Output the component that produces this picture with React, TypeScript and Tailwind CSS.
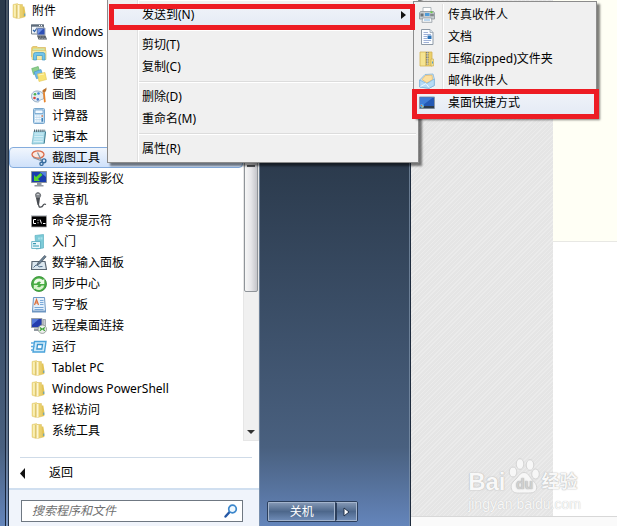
import React, { FC, ReactNode } from 'react';

const Icon: FC<{ children: ReactNode }> = ({ children }) => (
  <svg viewBox="0 0 16 16" className="size-4 shrink-0" aria-hidden="true">
    {children}
  </svg>
);

const FolderIcon = () => (
  <Icon>
    <path d="M1 1.5 5.5.5l1 1V15L5 15.6 1 14.2z" fill="#efdc84" stroke="#e0c878" strokeWidth=".5" />
    <path d="M2 2h1.8v12L2 13.5z" fill="#f9efb4" />
    <path d="M6.5 1.5h4v13l-4 1z" fill="#ead06c" stroke="#d8bd60" strokeWidth=".5" />
    <path d="M5.3 2h2.2v13l-1.4.5-.8-.6z" fill="#fdf6d2" />
    <path d="M4.9 2v13" stroke="#cdb157" strokeWidth=".8" />
    <path d="M10.5 3.5h1.8l1 6V14l-2.8.7z" fill="#e3c455" />
    <path d="M12.3 10.5h1V13h-1z" fill="#4f9bc8" />
  </Icon>
);

const MobilityIcon = () => (
  <Icon>
    <path d="M.5 1h12v9H.5z" fill="#f4f7fa" stroke="#77838f" />
    <path d="M0 .5h13v2.2H0z" fill="#5d6b7a" />
    <path d="M8 1.5h1M10 1.5h1" stroke="#fff" />
    <path d="m2 5.8 1.5 1.7 2.7-3.7" fill="none" stroke="#2b62a8" strokeWidth="1.2" />
    <path d="M6 4h8v7H6z" fill="#2e50b5" stroke="#a8afb8" />
    <path d="M7 5h5l-5 5z" fill="#6f93e6" />
    <path d="M6 11.5h8.5l1.5 4H7.5z" fill="#4c535b" />
    <path d="M7.5 13h7M8 14.5h7" stroke="#c0c5ca" strokeWidth=".7" strokeDasharray="1 .6" />
  </Icon>
);

const ExplorerIcon = () => (
  <Icon>
    <path d="M.7 2.5 2 1.5h4l1 1h7.5V12H.7z" fill="#ecd06d" stroke="#d6b85e" strokeWidth=".7" />
    <path d="M2 3.5h11.5v3H2z" fill="#cfe6b0" />
    <path d="M1 5.5h14v9H1z" fill="#f7eaa8" stroke="#dabd60" strokeWidth=".6" />
    <path d="M2.5 15V9.500q0-2 2-2h7.500q2 0 2 2V15h-2.700v-4.500H5.500V15z" fill="#74c4ea" stroke="#3f98c6" strokeWidth=".7" />
  </Icon>
);

const StickyIcon = () => (
  <Icon>
    <path d="m.7 2.500 6.500-2 1.800 6-6.500 2z" fill="#8fcf8b" stroke="#59ab65" strokeWidth=".6" />
    <path d="m3 6 7-2.500 2 7-6.500 2.200z" fill="#6db8e8" stroke="#3f8fc8" strokeWidth=".6" />
    <path d="m6.500 8 7.500-1.500 1.500 7-7.500 2z" fill="#f8e375" stroke="#e2c655" strokeWidth=".6" />
    <path d="m7.500 9 5.500-1" stroke="#fff6b8" />
  </Icon>
);

const PaintIcon = () => (
  <Icon>
    <path d="M6 4C2.500 4 .3 6.500.5 9.500S3 15 6.500 15c2 0 2-1.500 3-2.200s3.200.2 3.500-2.800C13.300 6 9.500 4 6 4z" fill="#e3edf5" stroke="#7f9cb8" strokeWidth=".8" />
    <circle cx="4" cy="7.200" r="1.300" fill="#4db04f" />
    <circle cx="7.500" cy="6.500" r="1.300" fill="#3e86d6" />
    <circle cx="3.500" cy="11" r="1.300" fill="#d9443a" />
    <circle cx="6.800" cy="12.400" r="1.300" fill="#4678c8" />
    <path d="m12 5.500 1.800-.2.900 9.700-1.700.5z" fill="#e8832a" />
    <path d="M11.500 5.500Q11 3 12.500 2.500T15.500.5q.5 3-1.500 5z" fill="#b8702e" />
  </Icon>
);

const CalculatorIcon = () => (
  <Icon>
    <rect x="2.500" y=".5" width="11" height="15" rx="1" fill="#b9d7ee" stroke="#78a6cc" />
    <path d="M4 2h8v3.500H4z" fill="#f2f9ff" stroke="#4d8cc0" strokeWidth=".6" />
    <path d="M4 8h8M4 10.500h8M4 13h8" stroke="#fff" strokeWidth="1.500" strokeDasharray="1.600 .6" />
    <path d="M10.500 7.200H12v1.600h-1.500z" fill="#d2734b" />
    <path d="M10.500 10H12v3.700h-1.500z" fill="#3f80b7" />
  </Icon>
);

const NotepadIcon = () => (
  <Icon>
    <path d="M3 2h11.500L13 14.500 1 15z" fill="#a9dbe9" stroke="#74b3c6" strokeWidth=".7" />
    <path d="M3.500 5h9M3.300 7.500h9M3 10h9M2.700 12.500h9" stroke="#e4f7fc" strokeWidth=".7" />
    <path d="M3 1.800h11.500" stroke="#55656d" strokeWidth="2.500" strokeDasharray="1 .9" />
    <path d="m14.500 3-1.300 11.500" stroke="#437e91" />
  </Icon>
);

const SnipIcon = () => (
  <Icon>
    <ellipse cx="7" cy="4.500" rx="6" ry="3.700" fill="#fbe9e0" stroke="#db6b4a" strokeWidth="1.300" />
    <path d="m2 7.500 9 3.500M6.500 2.500l4.500 9" stroke="#8397a8" strokeWidth="1.300" />
    <circle cx="13" cy="10.800" r="1.900" fill="none" stroke="#3a6ea0" strokeWidth="1.400" />
    <circle cx="10.500" cy="13.800" r="1.600" fill="none" stroke="#3a6ea0" strokeWidth="1.400" />
  </Icon>
);

const ProjectorIcon = () => (
  <Icon>
    <path d="M.5.5h15v11H.5z" fill="#1a3dae" stroke="#8a939d" />
    <path d="M9 1h6v5z" fill="#5681dd" />
    <path d="M3 4v6h6L7 8l4.500-4-2-2L5 6z" fill="#55d42d" />
    <path d="M6 12h4.500v2H6zM3.500 14h9v1.500h-9z" fill="#939aa1" />
  </Icon>
);

const MicIcon = () => (
  <Icon>
    <path d="M4.500 2.500Q5 .5 7 .5T9.800 3L9 5.500H5z" fill="#85898e" stroke="#55595d" strokeWidth=".7" />
    <path d="M5 6h4l-1 7H6.500z" fill="#484c51" />
    <path d="m7.500 13 .8 2q3 .5 3.700-1.500t3-1" fill="none" stroke="#4b4f53" strokeWidth="1.300" />
    <path d="M5.700 2.500h2.500" stroke="#c9cccf" />
  </Icon>
);

const CmdIcon = () => (
  <Icon>
    <path d="M.4 2.500h15.200V14H.4z" fill="#000" stroke="#aaa" strokeWidth=".8" />
    <path d="M0 2.700h16" stroke="#c9ccd0" strokeWidth="1.400" />
    <path d="M5 6.500H2.500v4H5M6.500 7.200h1M6.500 9.800h1M9 6.500l1.500 4M12 10.500h2.500" fill="none" stroke="#fff" />
  </Icon>
);

const StartedIcon = () => (
  <Icon>
    <path d="m4 1.500 8.500-1V14L5 15z" fill="#7dcbd8" stroke="#5fb2c2" strokeWidth=".7" />
    <path d="M7 3.500h2v2H7zM9.500 3.200h2v2.200h-2z" fill="#a9e0e8" />
    <path d="M.7 7.500h8.800v7H.7z" fill="#e9f8fb" stroke="#54a9bf" strokeWidth=".8" />
    <path d="M2 9.700h3M2 12h6" stroke="#3999b3" strokeWidth="1.200" />
  </Icon>
);

const MathIcon = () => (
  <Icon>
    <path d="M1 6.500h13l1.500 8H.5z" fill="#dbe7ef" stroke="#5a6773" strokeWidth="1.200" />
    <path d="M2.500 12.500q3-4 4-2t5 1" fill="none" stroke="#4f6e8c" />
    <path d="m6 10 .7-2L13.500.5l1.700 1.200L8.500 9z" fill="#6b8296" stroke="#3c4852" strokeWidth=".6" />
  </Icon>
);

const SyncIcon = () => (
  <Icon>
    <circle cx="8" cy="8" r="7.500" fill="#4aae45" stroke="#2e8a30" strokeWidth=".8" />
    <path d="M2.800 7.500a5.300 5.300 0 0 1 9-3.500L13.300 3v5H8.500L10 6.300a2.800 2.800 0 0 0-4.500 1.200z" fill="#eefae8" />
    <path d="M13.200 9.500a5.300 5.300 0 0 1-9 3L2.800 13.500v-4.500h4.700L6 10.500a2.800 2.800 0 0 0 4.500-1z" fill="#d8f3cc" />
  </Icon>
);

const WordpadIcon = () => (
  <Icon>
    <path d="M2.500.5h11l1 13.500h-13z" fill="#e3f0fb" stroke="#6d97c4" />
    <path d="m3.500 8 2-5.500 2 5.500M4.300 6h2.500" fill="none" stroke="#dd713d" strokeWidth="1.200" />
    <path d="M9 3.500h3.500M9 5.500h3.500M9 7.500h3.500M3.500 10.500h9M3.500 12.500h9" stroke="#7aa8d8" />
    <path d="M1 14h14v1.500H1z" fill="#6e96c1" />
  </Icon>
);

const RemoteIcon = () => (
  <Icon>
    <path d="M.5.5H11v9H.5z" fill="#233cae" stroke="#979ea7" />
    <path d="M1 1h7L1 7z" fill="#5479d8" />
    <path d="M12 1.500h2.500V9H12z" fill="#c8cdd2" stroke="#7d858c" strokeWidth=".6" />
    <path d="M3 10.500h5V13H3z" fill="#9299a1" />
    <circle cx="11.300" cy="11.200" r="4.200" fill="#eef1ee" stroke="#868e89" strokeWidth=".8" />
    <path d="m8.800 9.500 2 1.500-2 1.700M13.800 9.500l-2 1.500 2 1.700" fill="none" stroke="#3ca337" strokeWidth="1.300" />
  </Icon>
);

const RunIcon = () => (
  <Icon>
    <path d="M3.500 2.500H15L13.500 13H2z" fill="#cfeafa" stroke="#4aa3da" strokeWidth="1.400" />
    <path d="M6.500 5.500h5l-.7 4.500H5.900z" fill="#fff" stroke="#3894ce" strokeWidth="1.300" />
    <path d="M0 4h3M0 7.500h3.500M0 11h3" stroke="#5dabe0" strokeWidth="1.300" />
  </Icon>
);

const FaxIcon = () => (
  <Icon>
    <path d="M4 .5h8v5H4z" fill="#fff" stroke="#a0a8ae" strokeWidth=".8" />
    <path d="M1.500 4.500h13l1 1.500v6H.5V6z" fill="#c8cdd0" stroke="#8a9298" strokeWidth=".8" />
    <path d="M1.500 6.500h3v3h-3z" fill="#6a7278" />
    <path d="M6 6h4.500v3H6z" fill="#4f9cda" />
    <path d="M11.500 8h3" stroke="#53595e" strokeWidth="2.500" strokeDasharray=".8 .4" />
    <path d="M11.500 5.200h2" stroke="#5bd32f" strokeWidth="1.400" />
    <path d="M3.500 11h9l.5 4.300H3z" fill="#f8fbfc" stroke="#9098a0" strokeWidth=".8" />
    <path d="M5 13h6" stroke="#7fb2e0" />
  </Icon>
);

const DocumentIcon = () => (
  <Icon>
    <path d="M2.500.5H11l3 3v12H2.500z" fill="#fbfdff" stroke="#8d99a6" />
    <path d="M11 .5v3h3" fill="#dbe5ef" stroke="#8d99a6" strokeWidth=".7" />
    <path d="M4.500 3.500H9M4.500 5.500H12M4.500 7.500H8M4.500 9.500H8M4.500 11.500H12M4.500 13.500H10" stroke="#9fb0d6" />
    <path d="M8.500 6.500h4V10h-4z" fill="#2d73b8" />
  </Icon>
);

const ZipIcon = () => (
  <Icon>
    <path d="M1 1h6v14H1z" fill="#f5e491" stroke="#d3b254" strokeWidth=".8" />
    <path d="M7 1h6v14H7z" fill="#ecd06a" stroke="#d3b254" strokeWidth=".8" />
    <path d="M12 8h2.500v7H12z" fill="#f3e394" stroke="#c9aa4f" strokeWidth=".6" />
    <path d="M8.300 1v12.500" stroke="#5e6265" strokeWidth="2.400" strokeDasharray="1 .7" />
    <path d="M8.300 1v13" stroke="#d9dcdd" strokeWidth=".7" />
    <path d="M13 10.500h1v2h-1z" fill="#4f9bc8" />
  </Icon>
);

const MailIcon = () => (
  <Icon>
    <path d="M.7 7 6 1.500 14 1l1.300 5v6.500L10 15.300.7 14z" fill="#c7e4f7" stroke="#84b4d6" strokeWidth=".8" />
    <path d="m3 6.500 3.500-4L13 2.200l.5 4.300L8 10z" fill="#fce0a0" stroke="#edb55c" strokeWidth=".7" />
    <path d="m.7 7 7 3.500 7.600-4.500v6.500L10 15.300.7 14z" fill="#b5dbf5" stroke="#74abd3" strokeWidth=".6" />
    <path d="m1.500 13.500 5.500-3 3 4" fill="none" stroke="#f0faff" />
  </Icon>
);

const DesktopIcon = () => (
  <Icon>
    <path d="M.5 2h15v11.500H.5z" fill="#2459b5" stroke="#8b99a9" />
    <path d="M1 2.500h13L4 10H1z" fill="#3f7cd6" />
    <path d="M1 11h14v2.200H1z" fill="#2f3b4a" />
    <circle cx="3" cy="11" r="2" fill="#57b0ea" />
    <path d="M1.800 10h1.200v1.200H1.800z" fill="#ef6339" />
    <path d="M3.200 11.300h1.200v1.200H3.200z" fill="#f6cf3d" />
  </Icon>
);

const programs = [
  { label: 'Windows', icon: <MobilityIcon /> },
  { label: 'Windows', icon: <ExplorerIcon /> },
  { label: '便笺', icon: <StickyIcon /> },
  { label: '画图', icon: <PaintIcon /> },
  { label: '计算器', icon: <CalculatorIcon /> },
  { label: '记事本', icon: <NotepadIcon /> },
  { label: '截图工具', icon: <SnipIcon />, selected: true },
  { label: '连接到投影仪', icon: <ProjectorIcon /> },
  { label: '录音机', icon: <MicIcon /> },
  { label: '命令提示符', icon: <CmdIcon /> },
  { label: '入门', icon: <StartedIcon /> },
  { label: '数学输入面板', icon: <MathIcon /> },
  { label: '同步中心', icon: <SyncIcon /> },
  { label: '写字板', icon: <WordpadIcon /> },
  { label: '远程桌面连接', icon: <RemoteIcon /> },
  { label: '运行', icon: <RunIcon /> },
  { label: 'Tablet PC', icon: <FolderIcon /> },
  { label: 'Windows PowerShell', icon: <FolderIcon /> },
  { label: '轻松访问', icon: <FolderIcon /> },
  { label: '系统工具', icon: <FolderIcon /> },
];

const sendTargets = [
  { label: '传真收件人', icon: <FaxIcon /> },
  { label: '文档', icon: <DocumentIcon /> },
  { label: '压缩(zipped)文件夹', icon: <ZipIcon /> },
  { label: '邮件收件人', icon: <MailIcon /> },
  { label: '桌面快捷方式', icon: <DesktopIcon />, selected: true },
];

const ProgramList = () => (
  <div className="flex">
    <ul className="min-w-0 flex-1">
      <li>
        <button className="flex h-[21px] w-full items-center gap-1 pl-[3px]">
          <FolderIcon />
          附件
        </button>
      </li>
      {programs.map(({ label, icon, selected }, i) => (
        <li key={i}>
          <button
            className={
              selected
                ? 'flex h-[21px] w-full items-center gap-[5px] rounded-sm border border-[#84acdd] bg-linear-to-b from-[#f1f6fd] to-[#cfe1fa] pl-[21px]'
                : 'flex h-[21px] w-full items-center gap-[5px] pl-[22px]'
            }
          >
            {icon}
            {label}
          </button>
        </li>
      ))}
    </ul>
    <div className="flex w-4 flex-col border border-[#e6e6e6] bg-[#f0f0f0]">
      <div className="h-[291px] rounded-xs border border-[#8f9499] bg-linear-to-r from-[#f6f6f6] via-[#e6e6e9] to-[#c4c5ca] pt-[163px]">
        <div className="mx-auto h-0.5 w-2 bg-[#55585c]" />
      </div>
      <svg viewBox="0 0 8 4" className="mx-auto mt-auto mb-1.5 h-1 w-2" aria-hidden="true">
        <path d="M0 0h8L4 4z" fill="#333" />
      </svg>
    </div>
  </div>
);

const StartMenu = () => (
  <div className="flex w-2/3 shrink-0 border-r border-[#1e2b3d] bg-linear-to-b from-[#2b3a4c] from-30% via-[#49607f] via-85% to-[#6485bb]">
    <div className="w-1.5 border-r border-[#17243a]" />
    <div className="w-[3px] border-r border-[#24354c] bg-white/15" />
    <div className="flex min-w-0 flex-1 flex-col bg-white">
      <ProgramList />
      <div className="mt-4 mr-[7px] ml-[11px] flex flex-1 flex-col justify-center border-t border-[#cfdbe8]">
        <button className="flex h-[30px] items-center gap-6">
          <svg viewBox="0 0 5 11" className="h-[11px] w-[5px]" aria-hidden="true">
            <path d="M5 0v11L0 5.500z" fill="#111" />
          </svg>
          返回
        </button>
      </div>
      <div className="border-t-2 border-[#d0dff0] bg-[#f0f4fb] pt-2.5 pr-4 pb-1 pl-3">
        <label className="flex h-[22px] items-center border border-[#6f7882] bg-white pr-1 pl-2.5">
          <input
            type="text"
            aria-label="搜索程序和文件"
            placeholder="搜索程序和文件"
            className="min-w-0 flex-1 outline-none placeholder:text-[#6f6f6f] placeholder:italic"
          />
          <svg viewBox="0 0 14 14" className="size-3.5" fill="none" aria-hidden="true">
            <path d="m1.500 12.500 4.500-5" stroke="#2558a5" strokeWidth="2.400" strokeLinecap="round" />
            <circle cx="8.500" cy="5" r="3.800" fill="#eef8ff" stroke="#3c87cc" strokeWidth="1.700" />
          </svg>
        </label>
      </div>
    </div>
    <div className="flex w-[151px] items-end border-x border-[#8295ad]/70 pb-1 pl-[7px]">
      <div className="flex h-[21px] overflow-hidden rounded-xs border border-[#2c3f5c] text-white">
        <button className="w-[67px] border border-[#a3b4cc] bg-linear-to-b from-[#8296b3] via-[#4d678b] to-[#6d8ab5]">
          关机
        </button>
        <button
          aria-label="关机选项"
          className="flex w-[22px] items-center justify-center border border-l-2 border-[#a3b4cc] border-l-[#2c3f5c] bg-linear-to-b from-[#8296b3] via-[#4d678b] to-[#6d8ab5]"
        >
          <svg viewBox="0 0 7 10" className="h-2.5 w-[7px]" aria-hidden="true">
            <path d="M1 1v8l5-4z" fill="#fff" stroke="#22324a" />
          </svg>
        </button>
      </div>
    </div>
  </div>
);

const Watermark = () => (
  <div className="absolute right-9 bottom-3 font-['Liberation_Sans','Noto_Sans_CJK_SC',sans-serif] text-[#f8f8f8]">
    <div className="flex items-end gap-0.5 font-bold [text-shadow:0_0_1px_#aaa,0_0_2px_#ccc]">
      <span className="text-2xl leading-6">Bai</span>
      <svg viewBox="0 0 32 36" className="h-9 w-8" aria-hidden="true">
        <g fill="#f7f7f7" stroke="#d4d4d4">
          <ellipse cx="5" cy="14" rx="3.800" ry="5" />
          <ellipse cx="12" cy="6" rx="3.800" ry="5.300" />
          <ellipse cx="22" cy="7" rx="3.800" ry="5.300" />
          <ellipse cx="27.500" cy="16" rx="3.800" ry="5" />
          <path d="M16 14.500c-4 0-5.500 4-8 6.500S2 26 3.500 31s6 4 12.500 4 11.500.5 12.500-4-2.500-7-5-10-3.500-6.500-7.500-6.500z" />
        </g>
        <text x="8" y="31" fontSize="14" fontWeight="bold" fill="#d0d0d0">
          du
        </text>
      </svg>
      <span className="text-lg leading-6">经验</span>
    </div>
    <div className="text-sm leading-5 [text-shadow:0_0_1px_#bbb]">jingyan.baidu.com</div>
  </div>
);

const Page = () => (
  <div className="relative flex min-w-0 flex-1 flex-col">
    <div className="flex flex-1">
      <div className="flex-1 bg-[#e5e5e5] bg-[repeating-linear-gradient(135deg,#ebebeb_0px,#ebebeb_1px,transparent_1px,transparent_3px)]" />
      <div className="flex w-16 flex-col bg-white">
        <div className="h-[242px] border-b border-[#e8e8e4] bg-[#fffff5]" />
      </div>
    </div>
    <div className="h-2.5 border-t border-[#d8d8d8] bg-[#fafafa]" />
    <Watermark />
  </div>
);

const Separator = () => (
  <li className="flex h-2 items-center pl-[31px]">
    <span className="h-0.5 w-full border-t border-[#dcdcdc] bg-white" />
  </li>
);

const MenuItem: FC<{ children: ReactNode }> = ({ children }) => (
  <li>
    <button className="flex h-[22px] w-full items-center pl-[34px]">{children}</button>
  </li>
);

const ContextMenu = () => (
  <ul className="absolute -top-1 left-[107px] w-[312px] border-x border-b border-[#8c8c8c] bg-[#f0f0f0] pr-0.5 pb-0.5 shadow-[3px_3px_2px_rgba(0,0,0,0.5)]">
    <li className="absolute inset-y-0 left-[29px] w-0.5 border-l border-[#e0e0e0] bg-white" />
    <Separator />
    <li className="relative">
      <button className="flex h-[22px] w-full items-center justify-between bg-linear-to-b from-[#f0f3f9] to-[#e5ebf5] pr-2.5 pl-[34px]">
        发送到(N)
        <svg viewBox="0 0 5 8" className="h-2 w-[5px]" aria-hidden="true">
          <path d="M0 0v8l5-4z" fill="#111" />
        </svg>
      </button>
    </li>
    <Separator />
    <MenuItem>剪切(T)</MenuItem>
    <MenuItem>复制(C)</MenuItem>
    <Separator />
    <MenuItem>删除(D)</MenuItem>
    <MenuItem>重命名(M)</MenuItem>
    <Separator />
    <MenuItem>属性(R)</MenuItem>
  </ul>
);

const SendToMenu = () => (
  <ul className="absolute top-px left-[413px] w-[184px] border border-[#8c8c8c] bg-[#f0f0f0] py-0.5 shadow-[3px_3px_2px_rgba(0,0,0,0.5)]">
    <li className="absolute inset-y-0.5 left-[28px] w-0.5 border-l border-[#e0e0e0] bg-white" />
    {sendTargets.map(({ label, icon, selected }) => (
      <li key={label} className="relative">
        <button
          className={
            selected
              ? 'flex h-[22px] w-full items-center gap-[13px] bg-linear-to-b from-[#f0f3f9] to-[#e5ebf5] pl-[5px]'
              : 'flex h-[22px] w-full items-center gap-[13px] pl-[5px]'
          }
        >
          {icon}
          {label}
        </button>
      </li>
    ))}
  </ul>
);

const App = () => (
  <main className="relative flex min-h-screen overflow-hidden bg-white font-['Noto_Sans','Noto_Sans_CJK_SC',sans-serif] text-xs text-black">
    <StartMenu />
    <Page />
    <ContextMenu />
    <SendToMenu />
    {/* highlight frames around the two steps */}
    <div className="pointer-events-none absolute top-1 left-[109px] h-[26px] w-[306px] border-5 border-[#ed1c24]" />
    <div className="pointer-events-none absolute top-[89px] left-[412px] h-[30px] w-[187px] border-5 border-[#ed1c24]" />
  </main>
);

export default App;
